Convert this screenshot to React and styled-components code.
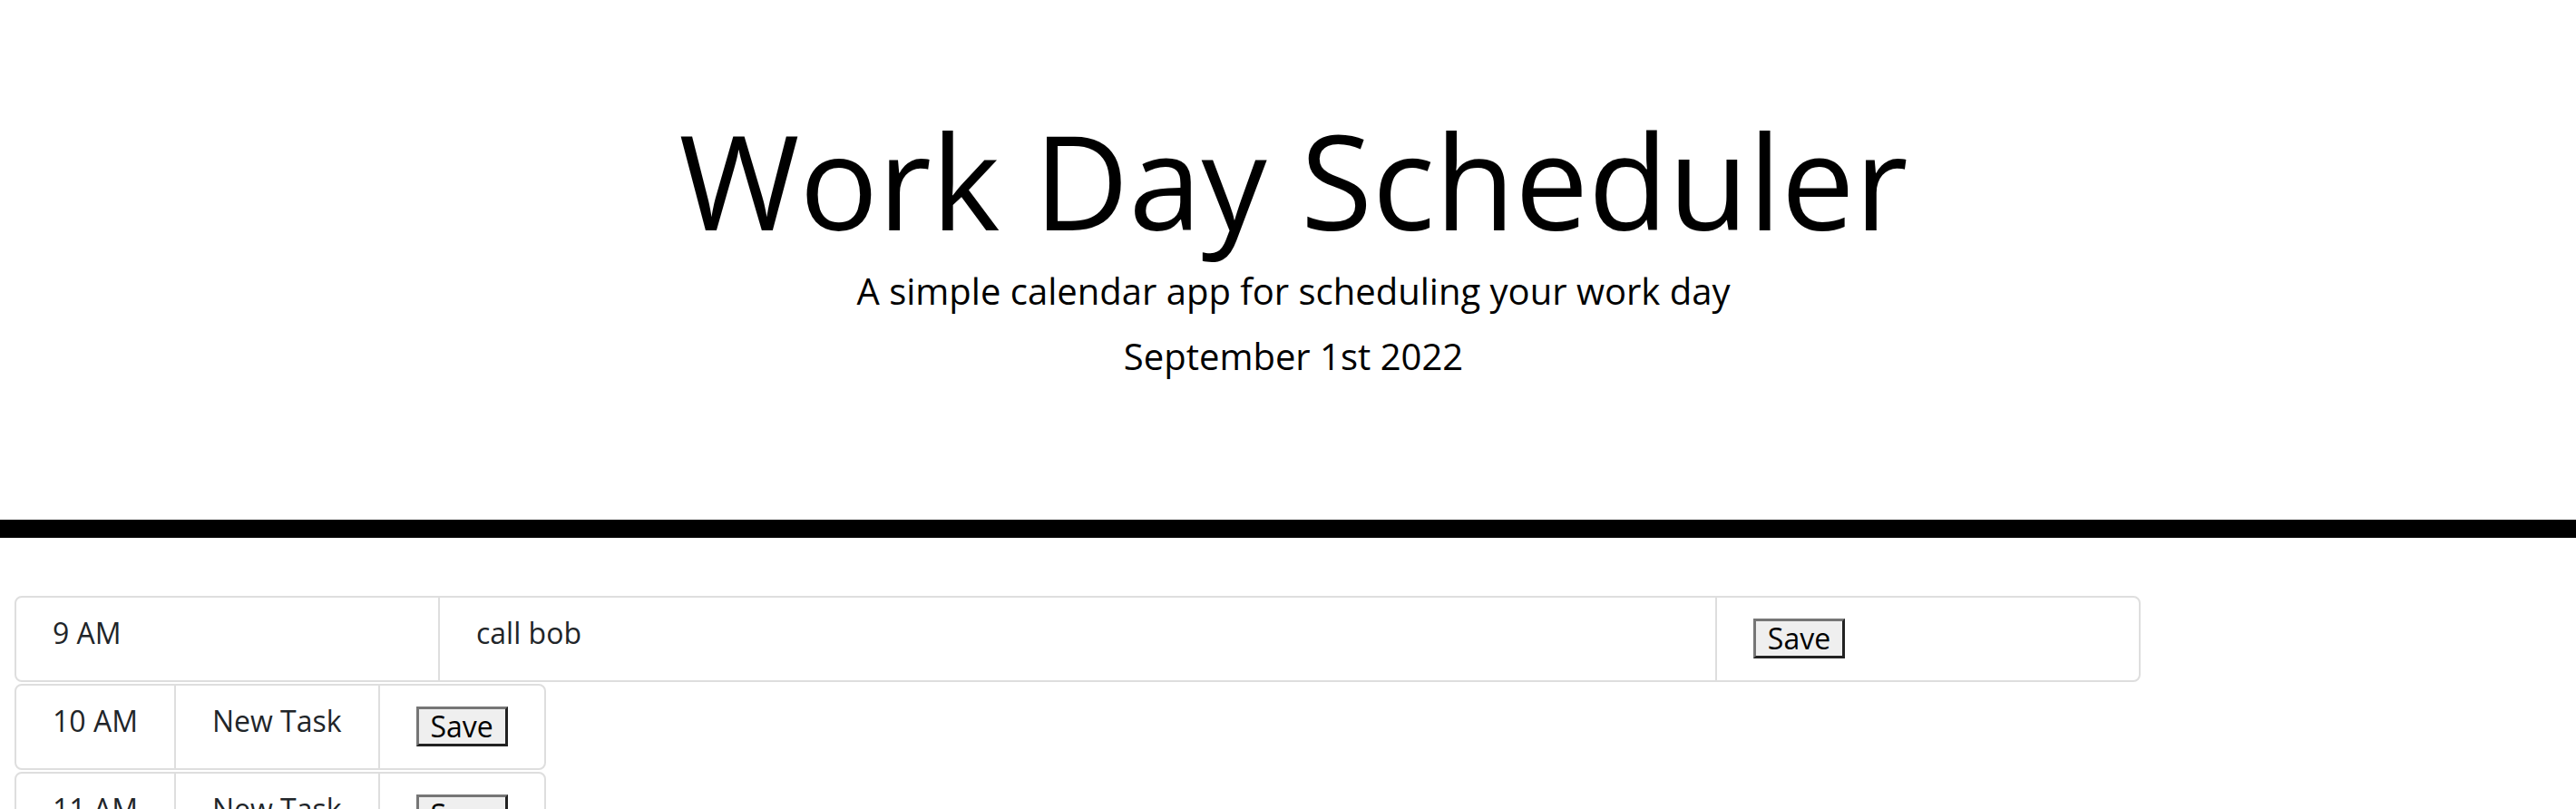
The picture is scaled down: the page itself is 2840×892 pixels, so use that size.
import React from "react";
import styled, { createGlobalStyle } from "styled-components";

const GlobalStyle = createGlobalStyle`
  * {
    box-sizing: border-box;
  }
  body {
    margin: 0;
    font-family: "Open Sans", "Liberation Sans", sans-serif;
    line-height: 1;
    color: #212529;
    background: #ffffff;
  }
`;

const Header = styled.header`
  text-align: center;
  color: #000000;
  padding: 112px 58px 128px 70px;
  border-bottom: 20px solid #000000;
  margin-bottom: 64px;
`;

const Title = styled.h1`
  margin: 0 0 16px;
  font-size: 144px;
  font-weight: 400;
  line-height: 1.2;
`;

const Lead = styled.p`
  margin: 0 0 32px;
  font-size: 40px;
  line-height: 1;
`;

const Schedule = styled.div`
  display: flex;
  flex-direction: column;
  align-items: flex-start;
  gap: 2px;
  padding-left: 16px;
`;

const TimeBlock = styled.div`
  display: grid;
  grid-template-columns: ${(p) => (p.$current ? "465px 1408px 467px" : "auto auto auto")};
  height: 95px;
  border: 2px solid #dedede;
  border-radius: 8px;
  font-size: 32px;
`;

const Cell = styled.div`
  padding: 15px 40px 0;
  line-height: 1.5;
  white-space: pre-wrap;
  border-left: ${(p) => (p.$divider ? "2px solid #dedede" : "none")};
`;

const ButtonCell = styled.div`
  display: flex;
  align-items: center;
  padding: 0 40px;
  border-left: 2px solid #dedede;
`;

const SaveBtn = styled.button`
  width: 101px;
  height: 44px;
  padding: 0;
  font-family: "Open Sans", "Liberation Sans", sans-serif;
  font-size: 32px;
  line-height: 1;
  color: #000000;
  background: #efefef;
  border: 3px solid;
  border-color: #767676 #222222 #222222 #767676;
  border-radius: 0;
  cursor: pointer;
`;

const hours = ["9 AM", "10 AM", "11 AM", "12 PM", "1 PM", "2 PM", "3 PM", "4 PM", "5 PM"];

export default function App() {
  return (
    <>
      <GlobalStyle />
      <Header>
        <Title>Work Day Scheduler</Title>
        <Lead>A simple calendar app for scheduling your work day</Lead>
        <Lead>September 1st 2022</Lead>
      </Header>
      <Schedule>
        {hours.map((hour, i) => (
          <TimeBlock key={hour} $current={i === 0}>
            <Cell>{hour}</Cell>
            <Cell $divider>{i === 0 ? "call bob" : "New Task"}</Cell>
            <ButtonCell>
              <SaveBtn>Save</SaveBtn>
            </ButtonCell>
          </TimeBlock>
        ))}
      </Schedule>
    </>
  );
}
